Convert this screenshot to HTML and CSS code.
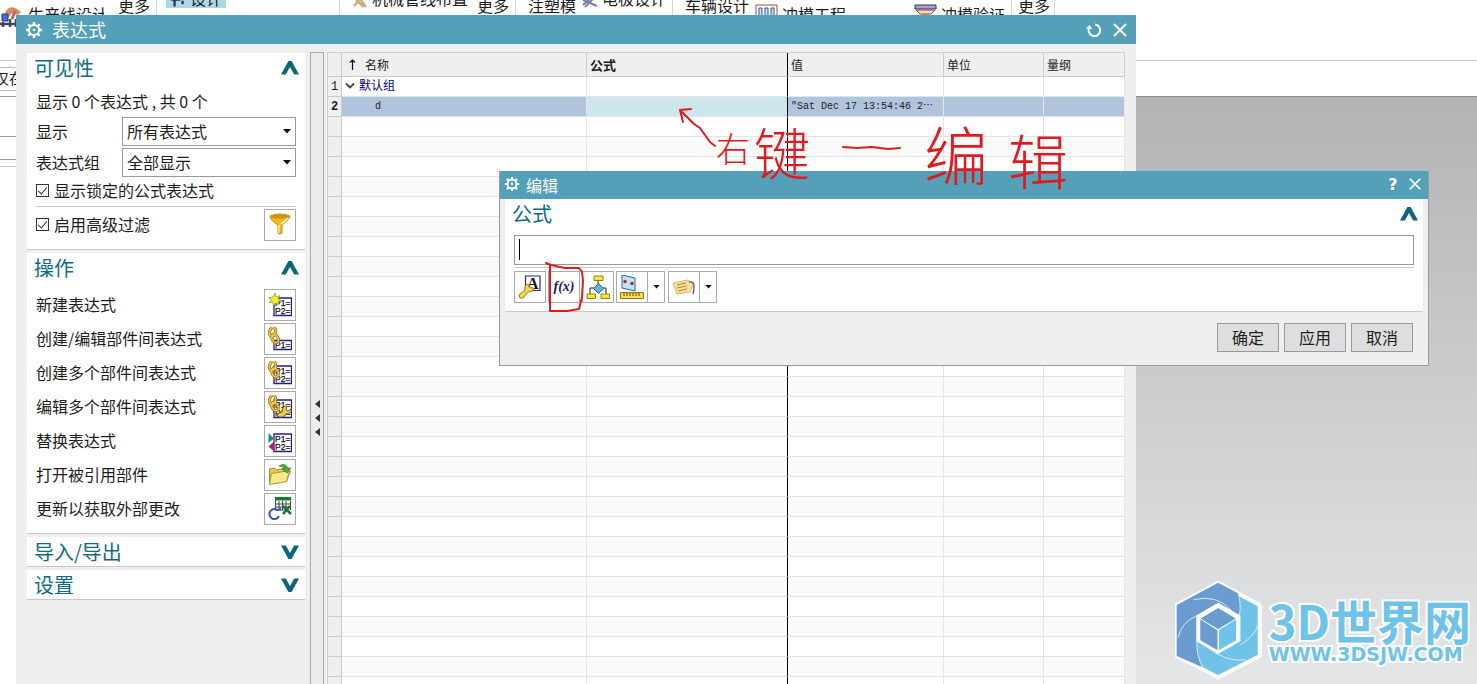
FILE: index.html
```html
<!DOCTYPE html>
<html lang="zh-CN">
<head>
<meta charset="utf-8">
<title>表达式</title>
<link rel="stylesheet" href="styles.css">
</head>
<body>
<svg class="defs" aria-hidden="true">
  <symbol id="gear" viewBox="0 0 18 18">
    <circle cx="9" cy="9" r="5" fill="none" stroke="#fff" stroke-width="2"/>
    <circle cx="9" cy="9" r="1.3" fill="#fff"/>
    <path d="M9 1v3M9 14v3M1 9h3M14 9h3M3.3 3.3l2.1 2.1M12.6 12.6l2.1 2.1M3.3 14.7l2.1-2.1M12.6 5.4l2.1-2.1" stroke="#fff" stroke-width="2.4"/>
  </symbol>
  <symbol id="close" viewBox="0 0 16 16"><path d="M2 2l12 12M14 2L2 14" stroke="#fff" stroke-width="2" fill="none"/></symbol>
  <symbol id="up" viewBox="0 0 18 14"><path d="M0 13.500L7.400 0h3.200L18 13.500h-4.800L9 6l-4.200 7.500z" fill="#0e6479"/></symbol>
  <symbol id="down" viewBox="0 0 18 14"><path d="M0 .5L7.400 14h3.200L18 .5h-4.800L9 8 4.800.5z" fill="#0e6479"/></symbol>
  <symbol id="caret" viewBox="0 0 8 5"><path d="M0 0h8L4 4.500z" fill="#111"/></symbol>
  <symbol id="chain" viewBox="0 0 24 24">
    <g fill="none" stroke="#8d6a10" stroke-width="3"><ellipse cx="4.500" cy="5" rx="3" ry="4.500" transform="rotate(15 4.500 5)"/><ellipse cx="7" cy="11.500" rx="3" ry="4.500" transform="rotate(-25 7 11.500)"/></g>
    <g fill="none" stroke="#f2cb45" stroke-width="1.600"><ellipse cx="4.500" cy="5" rx="3" ry="4.500" transform="rotate(15 4.500 5)"/><ellipse cx="7" cy="11.500" rx="3" ry="4.500" transform="rotate(-25 7 11.500)"/></g>
  </symbol>
  <symbol id="plist" viewBox="0 0 24 24">
    <path d="M6 5h17.500v17.500H6z" fill="#fff" stroke="#2a1c86" stroke-width="1.300"/>
    <g font-family="Liberation Sans" font-size="8.500" fill="#111" stroke="#111" stroke-width=".25"><text x="7" y="13">P1=</text><text x="7" y="21">P2=</text></g>
  </symbol>
</svg>

<main class="desktop">
  <header class="ribbon">
    <div class="group group-line"><svg class="robot" viewBox="0 0 24 24"><path d="M5 9q4-9 12-4l4 3-3 3-6-2-4 5z" fill="#d98a68"/><path d="M15 7l-3 8" stroke="#b56a4d" stroke-width="3"/><path d="M2 10h6v7H2z" fill="#3f6fd8" stroke="#223a8a"/><path d="M0 20h22M3 18v5M10 15v8M16 15v8" stroke="#445" stroke-width="2.500"/></svg><span class="low">生产线设计</span><span class="more">更多</span></div>
    <div class="group group-design"><span class="active"><svg viewBox="0 0 14 8"><path d="M1 2h8M4 2v6M11 3v3" stroke="#235" stroke-width="2"/></svg>设计</span></div>
    <div class="group group-mech"><span class="high"><svg viewBox="0 0 14 12"><path d="M1 10L7 3l6 8M3 4l8 7" stroke="#c9b27e" stroke-width="2.500" fill="none"/></svg>机械管线布置</span><span class="more">更多</span></div>
    <div class="group group-mold"><span class="more">注塑模</span><span class="high"><svg viewBox="0 0 16 12"><path d="M1 4l14 6M3 11L12 2M1 9l8-7" stroke="#77809e" stroke-width="2"/></svg>电极设计</span></div>
    <div class="group group-car"><span class="more">车辆设计</span><svg class="die" viewBox="0 0 23 20"><path d="M1 1h21v19H1z" fill="#fff" stroke="#a44"/><path d="M4 4h3v16H4zM10 4h3v16h-3zM16 4h3v16h-3z" fill="#cde" stroke="#33579a"/></svg><span class="low">冲模工程</span><svg class="verify" viewBox="0 0 23 20"><path d="M1 1h21v4H1z" fill="#aaa0d8" stroke="#336"/><path d="M2 6h19l-4 4H6zM2 17l6-6h7l6 6z" fill="#eda" stroke="#a44"/></svg><span class="low">冲模验证</span></div>
    <div class="group group-last"><span class="more">更多</span></div>
  </header>
  <div class="filterbar"><span>仅在</span></div>
  <div class="workspace"><div class="navigator"><i></i><i></i></div><section class="viewport"></section></div>

  <section class="window main-window">
    <header class="titlebar">
      <svg class="gear"><use href="#gear"/></svg><h1>表达式</h1>
      <button class="tool" aria-label="重置"><svg viewBox="0 0 16 16"><path d="M9 2.500A5.800 5.800 0 1 1 3 6" fill="none" stroke="#fff" stroke-width="2"/><path d="M0 6.500L3.500 3l3 4z" fill="#fff"/></svg></button>
      <button class="tool" aria-label="关闭"><svg><use href="#close"/></svg></button>
    </header>
    <div class="window-body">
      <aside class="sidebar">
        <section class="card">
          <h2>可见性<button aria-label="折叠"><svg><use href="#up"/></svg></button></h2>
          <div class="card-body">
            <p class="summary">显示 0 个表达式 , 共 0 个</p>
            <div class="field"><label for="show">显示</label><span class="select"><select id="show"><option>所有表达式</option></select><svg><use href="#caret"/></svg></span></div>
            <div class="field"><label for="grp">表达式组</label><span class="select"><select id="grp"><option>全部显示</option></select><svg><use href="#caret"/></svg></span></div>
            <label class="check"><input type="checkbox" checked>显示锁定的公式表达式</label>
            <div class="action ruled"><label class="check"><input type="checkbox" checked>启用高级过滤</label>
              <button class="icon" aria-label="过滤"><svg viewBox="0 0 24 24"><path d="M2 3q10-4 20 0 0 3-8 9v8q-3 2-4 0v-8Q2 7 2 3z" fill="#f0b818" stroke="#c48a10"/><path d="M13 11q6-4 7-7" stroke="#fff3a8" stroke-width="2" fill="none"/><ellipse cx="12" cy="3.500" rx="9.500" ry="2" fill="#c8921c"/><path d="M11 12v8" stroke="#fde98a" stroke-width="1.500"/></svg></button></div>
          </div>
        </section>
        <section class="card">
          <h2>操作<button aria-label="折叠"><svg><use href="#up"/></svg></button></h2>
          <div class="card-body actions">
            <div class="action"><span>新建表达式</span><button class="icon" aria-label="新建表达式"><svg viewBox="0 0 24 24"><use href="#plist"/><path d="M7 0l1.200 4L12 2.500 10 6l3.500 1.500-3.500 1 1 3.500-3.500-2-2 2.500-.8-3.500L1 9.500l2.500-2.700-3-2L5 4z" fill="#f3ee2e" stroke="#7d9c2c" stroke-width=".7"/></svg></button></div>
            <div class="action"><span>创建/编辑部件间表达式</span><button class="icon" aria-label="创建/编辑部件间表达式"><svg viewBox="0 0 24 24"><path d="M6 13.500h17.500v9H6z" fill="#fff" stroke="#2a1c86" stroke-width="1.300"/><text x="7" y="21" font-family="Liberation Sans" font-size="8.500" fill="#111" stroke="#111" stroke-width=".25">P1=</text><use href="#chain"/></svg></button></div>
            <div class="action"><span>创建多个部件间表达式</span><button class="icon" aria-label="创建多个部件间表达式"><svg viewBox="0 0 24 24"><use href="#plist"/><use href="#chain"/></svg></button></div>
            <div class="action"><span>编辑多个部件间表达式</span><button class="icon" aria-label="编辑多个部件间表达式"><svg viewBox="0 0 24 24"><use href="#plist"/><use href="#chain"/><path d="M9 21q0-3 5-4 1-7 5-6l-1 4 2 1 3-2q1 5-5 5-3 5-9 2z" fill="#f2cb45" stroke="#7d6010"/></svg></button></div>
            <div class="action"><span>替换表达式</span><button class="icon" aria-label="替换表达式"><svg viewBox="0 0 24 24"><use href="#plist"/><path d="M.5 4L6 9.500.5 14z" fill="#168ba0"/><path d="M6 12.500v10l-5.500-5z" fill="#b01a86"/></svg></button></div>
            <div class="action"><span>打开被引用部件</span><button class="icon" aria-label="打开被引用部件"><svg viewBox="0 0 24 24"><path d="M1.500 21V6l5-1 2 2 9-2v4l5-1-4 10z" fill="#e8c74a" stroke="#a88a25"/><path d="M1.500 21.500l2-11 18-3-3 11z" fill="#f8ea88" stroke="#b3952e"/><path d="M11 3q6-4 9 2h3l-4 5-5-4h3q-2-3-6-3z" fill="#55a83b" stroke="#2d7a25" stroke-width=".7"/></svg></button></div>
            <div class="action"><span>更新以获取外部更改</span><button class="icon" aria-label="更新以获取外部更改"><svg viewBox="0 0 24 24"><path d="M7 1h16v12H7z" fill="#fff"/><path d="M7.500 1v12M11 4v9M14.500 4v9M18 4v9M22.500 4v9M7 7h16M7 10h16M7 13h12" stroke="#445" stroke-width="1"/><path d="M7 0h16v3.500H7z" fill="#157a2c"/><path d="M15 9l8 8M22 9l-7 8" stroke="#157a2c" stroke-width="2.600"/><path d="M11 19a5 5 0 1 1-1-5.500" stroke="#3558ab" stroke-width="2" fill="none"/><path d="M8 13.500h5V10z" fill="#3558ab"/></svg></button></div>
          </div>
        </section>
        <section class="card closed"><h2>导入/导出<button aria-label="展开"><svg><use href="#down"/></svg></button></h2></section>
        <section class="card closed"><h2>设置<button aria-label="展开"><svg><use href="#down"/></svg></button></h2></section>
      </aside>
      <div class="splitter"><i></i><i></i><i></i></div>
      <div class="sheet">
        <table>
          <colgroup><col class="c-num"><col class="c-name"><col class="c-formula"><col class="c-value"><col class="c-unit"><col class="c-dim"></colgroup>
          <thead><tr><th></th><th><svg class="sort" viewBox="0 0 7 11"><path d="M3.500 11V1M1 3.500L3.500 1 6 3.500" fill="none" stroke="#111" stroke-width="1.200"/></svg>名称</th><th class="strong">公式</th><th>值</th><th>单位</th><th>量纲</th></tr></thead>
          <tbody>
            <tr><th>1</th><td class="group-name"><svg viewBox="0 0 10 8"><path d="M1 1.500l4 4 4-4" fill="none" stroke="#444" stroke-width="1.800"/></svg>默认组</td><td></td><td></td><td></td><td></td></tr>
            <tr class="selected"><th>2</th><td class="item-name">d</td><td class="editing"></td><td>"Sat Dec 17 13:54:46 2⋯</td><td></td><td></td></tr>
            <tr><th></th><td></td><td></td><td></td><td></td><td></td></tr>
            <tr><th></th><td></td><td></td><td></td><td></td><td></td></tr>
            <tr><th></th><td></td><td></td><td></td><td></td><td></td></tr>
            <tr><th></th><td></td><td></td><td></td><td></td><td></td></tr>
            <tr><th></th><td></td><td></td><td></td><td></td><td></td></tr>
            <tr><th></th><td></td><td></td><td></td><td></td><td></td></tr>
            <tr><th></th><td></td><td></td><td></td><td></td><td></td></tr>
            <tr><th></th><td></td><td></td><td></td><td></td><td></td></tr>
            <tr><th></th><td></td><td></td><td></td><td></td><td></td></tr>
            <tr><th></th><td></td><td></td><td></td><td></td><td></td></tr>
            <tr><th></th><td></td><td></td><td></td><td></td><td></td></tr>
            <tr><th></th><td></td><td></td><td></td><td></td><td></td></tr>
            <tr><th></th><td></td><td></td><td></td><td></td><td></td></tr>
            <tr><th></th><td></td><td></td><td></td><td></td><td></td></tr>
            <tr><th></th><td></td><td></td><td></td><td></td><td></td></tr>
            <tr><th></th><td></td><td></td><td></td><td></td><td></td></tr>
            <tr><th></th><td></td><td></td><td></td><td></td><td></td></tr>
            <tr><th></th><td></td><td></td><td></td><td></td><td></td></tr>
            <tr><th></th><td></td><td></td><td></td><td></td><td></td></tr>
            <tr><th></th><td></td><td></td><td></td><td></td><td></td></tr>
            <tr><th></th><td></td><td></td><td></td><td></td><td></td></tr>
            <tr><th></th><td></td><td></td><td></td><td></td><td></td></tr>
            <tr><th></th><td></td><td></td><td></td><td></td><td></td></tr>
            <tr><th></th><td></td><td></td><td></td><td></td><td></td></tr>
            <tr><th></th><td></td><td></td><td></td><td></td><td></td></tr>
            <tr><th></th><td></td><td></td><td></td><td></td><td></td></tr>
            <tr><th></th><td></td><td></td><td></td><td></td><td></td></tr>
            <tr><th></th><td></td><td></td><td></td><td></td><td></td></tr>
            <tr><th></th><td></td><td></td><td></td><td></td><td></td></tr>
          </tbody>
        </table>
      </div>
    </div>
  </section>

  <section class="window dialog">
    <header class="titlebar">
      <svg class="gear"><use href="#gear"/></svg><h1>编辑</h1>
      <button class="tool help" aria-label="帮助">?</button>
      <button class="tool" aria-label="关闭"><svg><use href="#close"/></svg></button>
    </header>
    <div class="dialog-body">
      <section class="card">
        <h2><label for="formula">公式</label><button aria-label="折叠"><svg><use href="#up"/></svg></button></h2>
        <div class="formula"><input id="formula" type="text"></div>
        <div class="toolbar">
          <button class="icon" aria-label="属性"><svg viewBox="0 0 24 24"><path d="M7.500 1h14.500v14.500H7.500z" fill="#fff" stroke="#2a2a7a" stroke-width="1.200"/><text x="9" y="13.500" font-family="Liberation Serif" font-weight="bold" font-size="16" fill="#111">A</text><path d="M1 20l6-5q-1-5 3-6l1 3 4 1q1 4-5 4l-5 6-3 0z" fill="#f5d44e" stroke="#a37b12"/></svg></button>
          <button class="icon fx" aria-label="函数">f(x)</button>
          <button class="icon" aria-label="关系"><svg viewBox="0 0 24 24"><path d="M12 6v4M12 16v2M12 13H4v6M12 13h8v6" stroke="#222" fill="none"/><path d="M8 1h9v4.500H8zM1 19h8.500v4.500H1zM15 19h8.500v4.500H15z" fill="#f8ec2a" stroke="#8a8420"/><path d="M12.500 8.500l5 5-5 5-5-5z" fill="#62aee0" stroke="#28618c"/></svg></button>
          <div class="split"><button class="icon" aria-label="测量"><svg viewBox="0 0 24 24"><path d="M2 0l13 3v13L2 13z" fill="#bce6fa" stroke="#2a6a9b"/><circle cx="5" cy="6.500" r="1.700" fill="#b52030"/><circle cx="12" cy="8.500" r="1.700" fill="#b52030"/><path d="M.5 17.500h23v6H.5z" fill="#f7dc5a" stroke="#96740e"/><path d="M4 18v3M7 18v3M10 18v3M13 18v3M16 18v3M19 18v3" stroke="#5b4708"/></svg></button><button class="drop" aria-label="测量选项"><svg><use href="#caret"/></svg></button></div>
          <div class="split"><button class="icon" aria-label="标签"><svg viewBox="0 0 24 24"><path d="M1 8l15-3 5 5-3 7-13 2z" fill="#f8dfa0" stroke="#dcb568"/><path d="M5 10l9-2M5 13l10-2M6 16l9-2" stroke="#b58435"/><path d="M17 7q5-1 5 4t-1 8" fill="none" stroke="#555" stroke-width="1.200"/></svg></button><button class="drop" aria-label="标签选项"><svg><use href="#caret"/></svg></button></div>
        </div>
      </section>
      <footer><button>确定</button><button>应用</button><button>取消</button></footer>
    </div>
  </section>

  <svg class="marks" viewBox="0 0 600 230" aria-hidden="true">
    <g fill="none" stroke="#e01b1f" stroke-width="2" stroke-linecap="round" stroke-linejoin="round">
      <path d="M191 19l-11 1 3 12M180 20l14 14 6 4 10 14 5 4"/>
      <path d="M343 57l14 1 15-1 16 2 12-1"/>
      <path d="M46 173l5 2 14 3 14 0 3 4 1 9-1 16-3 12-12 2-17 0 0-46"/>
    </g>
  </svg>
  <p class="note"><span class="n1">右</span><span class="n2">键</span><span class="n3">编</span><span class="n4">辑</span></p>

  <div class="brand">
    <svg viewBox="75 30 262 300"><path d="M205 38l125 67v153l-125 64L80 258V105z" fill="#6fc2e8" stroke="#fff" stroke-width="12" stroke-linejoin="round"/><path d="M205 38l60 31q10 30 4 68l-64 40-64 38q-2 40 17 77L80 258V105z" fill="#6a9bd1"/><path d="M265 69q10 30 4 68M130 89q70-18 115 32M84 203q10-45 56-66M158 292q-19-37-17-77M288 270q-60 8-118-40M328 155q-8 40-56 70" fill="none" stroke="#d8ecf8" stroke-width="3"/><path d="M205 98l67 38v78l-67 38-66-38v-78z" fill="#fff"/><path d="M205 114l53 31-53 33-53-33z" fill="#6a9bd1"/><path d="M151 148l52 33v60l-52-30z" fill="#6a9bd1"/><path d="M259 148l-52 33v60l52-30z" fill="#6fc2e8"/></svg>
    <div><strong>3D世界网</strong><small>WWW.3DSJW.COM</small></div>
  </div>
</main>
</body>
</html>
```
FILE: styles.css
```css
* { box-sizing: border-box; }
body { margin: 0; font: 16px/20px "Noto Sans CJK SC", sans-serif; color: #1d1d1d; }
h1, h2, p { margin: 0; font-weight: 400; }
button, input, select { font: inherit; color: inherit; margin: 0; padding: 0; border-radius: 0; }
button { border: 0; background: none; display: flex; align-items: center; justify-content: center; }
.defs { display: none; }
.desktop { position: relative; display: flex; flex-direction: column; height: 100vh; overflow: hidden; background: #fff; }

.ribbon { display: flex; height: 61px; border-bottom: 1px solid #ccc; white-space: nowrap; flex: none; }
.group { display: flex; align-items: flex-start; border-right: 1px solid #d4d4d4; height: 44px; flex: none; }
.group svg { flex: none; }
.more { margin-top: -5px; }
.low { margin-top: 4px; }
.high, .active { display: flex; gap: 4px; margin-top: -12px; }
.high svg, .active svg { width: 16px; height: 12px; margin-top: 8px; }
.active { background: #add8e3; height: 20px; padding: 0 4px; }
.group-line { width: 157px; }
.group-line .more { margin-left: 14px; }
.robot { width: 24px; height: 24px; margin: 4px 4px 0 0; }
.robot + .low { width: 76px; overflow: hidden; }
.group-design { width: 183px; padding-left: 9px; }
.group-mech { width: 176px; padding-left: 12px; gap: 9px; }
.group-mold { width: 157px; padding-left: 12px; gap: 6px; }
.group-car { width: 339px; padding-left: 12px; }
.die, .verify { width: 23px; height: 20px; margin: 4px 4px 0 6px; }
.verify { margin-left: 68px; }
.group-last { width: 43px; padding-left: 6px; }

.filterbar { flex: none; height: 35px; padding-top: 6px; }
.filterbar span { display: block; width: 60px; height: 24px; border: 1px solid #bbb; border-left: 0; font-size: 15px; text-indent: -6px; }
.workspace { flex: 1; display: flex; }
.navigator { width: 17px; border-top: 1px solid #999; }
.navigator i { display: block; height: 40px; border-bottom: 1px solid #999; }
.navigator i + i { height: 30px; border-top: 0; padding-top: 22px; }
.navigator i + i::before { content: ""; display: block; border-top: 1px solid #999; }
.navigator i + i { border-color: #ccc; }
.viewport { flex: 1; border-top: 1px solid #8c8c8c; background: linear-gradient(#b2b3b4, #e5e6e8); }

.window { position: absolute; display: flex; flex-direction: column; background: #efefef; }
.main-window { left: 16px; right: 341px; top: 15px; bottom: 0; }
.titlebar { display: flex; align-items: center; flex: none; height: 29px; padding: 0 8px 0 9px; background: #55a0b9; color: #fff; }
.titlebar h1 { flex: 1; font-size: 18px; padding-bottom: 2px; }
.gear { width: 18px; height: 18px; margin-right: 9px; }
.tool { width: 16px; height: 16px; margin-left: 10px; }
.tool svg { width: 16px; height: 16px; }
.window-body { display: flex; flex: 1; min-height: 0; padding: 8px 11px 0; }

.sidebar { width: 278px; display: flex; flex-direction: column; gap: 3px; padding-top: 1px; flex: none; }
.card { background: #fff; border-bottom: 1px solid #c8c8c8; }
.card h2 { display: flex; justify-content: space-between; align-items: center; height: 30px; padding: 0 6px 0 7px; font-size: 20px; color: #0e6b85; }
.card h2 svg { width: 18px; height: 14px; display: block; }
.closed h2 { height: 29px; }
.card-body { padding: 0 9px 8px; }
.summary { padding: 8px 0 6px; white-space: pre; }
.field { display: flex; align-items: center; justify-content: space-between; margin-bottom: 2px; }
.field label, .action > span { padding-bottom: 2px; }
.select { position: relative; width: 174px; }
.select select { display: block; appearance: none; width: 100%; height: 29px; padding: 0 0 2px 4px; border: 1px solid #999; background: #fff; }
.select svg { position: absolute; right: 5px; top: 12px; width: 8px; height: 5px; pointer-events: none; }
.check { display: flex; align-items: center; gap: 5px; padding: 1px 0 3px; }
.check input { appearance: none; width: 13px; height: 13px; border: 1px solid #333; display: flex; justify-content: center; }
.check input::after { content: ""; width: 4px; height: 8px; border: solid #333; border-width: 0 1px 1px 0; transform: rotate(40deg); }
.action { display: flex; align-items: center; justify-content: space-between; }
.ruled { border-top: 1px solid #ccc; padding-top: 2px; margin-top: 3px; }
.actions { display: flex; flex-direction: column; gap: 2px; padding-top: 6px; }
.icon { width: 32px; height: 32px; flex: none; border: 1px solid #aaa; background: #fff; }
.icon svg { width: 24px; height: 24px; }

.splitter { display: flex; flex-direction: column; align-items: center; justify-content: center; gap: 6px; width: 14px; margin: 0 3px 0 5px; padding-top: 98px; border: 1px solid #aaa; border-bottom: 0; background: #ececec; flex: none; }
.splitter i { border: 4px solid transparent; border-right: 5px solid #333; border-left: 0; }

.sheet { flex: 1; overflow: hidden; border: 1px solid #d0d0d0; border-width: 1px 0 0 1px; background: #fff; }
table { width: 100%; table-layout: fixed; border-collapse: separate; border-spacing: 0; font: 12px/18px "Liberation Mono", "Noto Sans CJK SC", monospace; }
.c-num { width: 14px; } .c-name { width: 245px; } .c-formula { width: 201px; } .c-value { width: 156px; } .c-unit { width: 100px; }
th, td { height: 20px; padding: 0 0 0 3px; border: solid #e4e4e4; border-width: 0 1px 1px 0; text-align: left; font-weight: 400; overflow: hidden; white-space: nowrap; }
thead th { height: 24px; padding-top: 4px; background: #efefef; border-color: #ccc; }
tbody th { background: #efefef; border-color: #ccc; text-align: center; padding: 0; }
tr > :nth-child(3) { border-right-color: #000; }
tbody tr:nth-child(even) td { background: #fafafa; }
.strong { font-weight: 700; font-size: 13px; }
.sort { width: 7px; height: 11px; margin: 0 9px 0 4px; }
.group-name { color: #00008b; }
.group-name svg { width: 10px; height: 8px; margin-right: 4px; }
.item-name { padding-left: 33px; }
tbody tr.selected td { background: #b0c4de; font-size: 10px; }
tbody tr.selected .editing { background: #cce6eb; }
.selected th { font-weight: 700; }

.dialog { left: 499px; right: 48px; top: 171px; border: 1px solid #999; border-top: 0; }
.dialog .titlebar { height: 28px; padding: 0 5px 2px 4px; }
.dialog h1 { font-size: 16px; padding: 2px 0 0; }
.dialog .gear { width: 16px; height: 16px; margin-right: 6px; }
.dialog .tool svg { width: 14px; height: 14px; }
.dialog .tool + .tool { margin-left: 6px; }
.help { font: bold 16px "DejaVu Sans", sans-serif; }
.dialog-body { padding: 0 5px; }
.dialog .card { padding-bottom: 8px; }
.dialog h2 { padding: 0 5px 0 7px; }
.formula { position: relative; margin: 6px 9px 0; padding-bottom: 2px; border-bottom: 1px solid #ccc; }
.formula input { display: block; width: 100%; height: 30px; border: 1px solid #999; padding: 0 5px; background: #fff; }
.formula::after { content: ""; position: absolute; left: 5px; top: 4px; width: 1px; height: 21px; background: #000; }
.toolbar { display: flex; gap: 2px; padding: 3px 9px 0; }
.fx { font: italic bold 14px "Liberation Serif", serif; color: #21165f; }
.split { display: flex; }
.split + .split { margin-left: 1px; }
.drop { width: 18px; margin-left: -1px; border: 1px solid #aaa; background: #fff; }
.drop svg { width: 7px; height: 4px; }
footer { display: flex; justify-content: flex-end; gap: 5px; padding: 11px 10px 13px; }
footer button { width: 62px; height: 29px; padding-bottom: 2px; border: 1px solid #999; background: #dedede; }

.marks { position: absolute; left: 500px; top: 90px; width: 600px; height: 230px; pointer-events: none; }
.note { position: absolute; left: 716px; top: 120px; display: flex; align-items: flex-start; color: #e01b1f; font-weight: 300; pointer-events: none; }
.note span { display: block; }
.n1 { font-size: 34px; line-height: 56px; }
.n2 { font-size: 56px; line-height: 62px; margin-left: 4px; }
.n3 { font-size: 64px; line-height: 64px; margin-left: 114px; }
.n4 { font-size: 60px; line-height: 78px; margin-left: 20px; }

.brand { position: absolute; right: 6px; bottom: 4px; display: flex; align-items: center; gap: 7px; color: #6fc2e8; }
.brand svg { width: 87px; height: 100px; }
.brand strong, .brand small { display: block; font-weight: 700; -webkit-text-stroke: 4px #fff; paint-order: stroke fill; white-space: nowrap; }
.brand strong { font-size: 47px; line-height: 48px; }
.brand small { font: bold 19px/20px "DejaVu Sans", sans-serif; }
```
